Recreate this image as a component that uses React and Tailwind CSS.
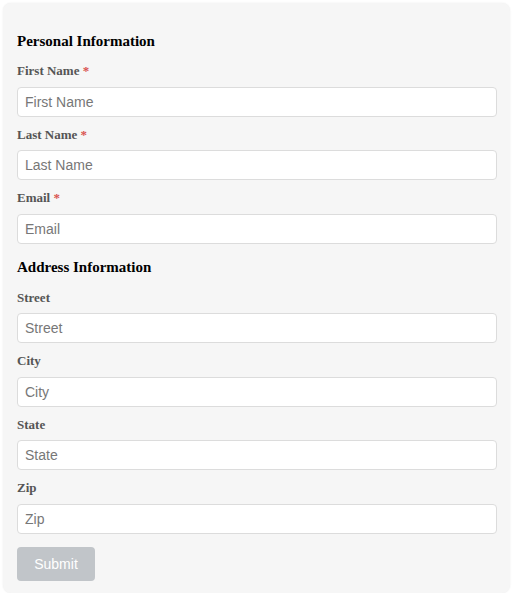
function Field({ name, req }) {
  return (
    <div className="flex flex-col mb-[10px]">
      <label className="text-[13px] leading-[16.5px] font-bold text-[#555] mb-[7px] font-['Liberation_Serif',serif]">
        {name}
        {req && <span className="text-[#d9534f]"> *</span>}
      </label>
      <input
        className="w-full h-[30px] border border-[#dcdcdc] rounded-[4px] bg-white px-[7px] text-[14px] text-[#333] placeholder:text-[#777] outline-none font-['Liberation_Sans',Arial,sans-serif]"
        placeholder={name}
      />
    </div>
  );
}

export default function App() {
  return (
    <div className="w-[513px] h-[593px] bg-white pt-[3px] px-[3px]">
      <div className="flex flex-col items-stretch bg-[#f6f6f6] rounded-[8px] shadow-[0_0_2px_rgba(0,0,0,0.08)] pl-[14px] pr-[13px] pt-[30px] h-[590px]">
        <h2 className="text-[15px] leading-[16px] font-bold text-black mb-[14px] font-['Liberation_Serif',serif]">
          Personal Information
        </h2>
        <Field name="First Name" req />
        <Field name="Last Name" req />
        <Field name="Email" req />
        <h2 className="text-[15px] leading-[16px] font-bold text-black mt-[5px] mb-[15px] font-['Liberation_Serif',serif]">
          Address Information
        </h2>
        <Field name="Street" />
        <Field name="City" />
        <Field name="State" />
        <Field name="Zip" />
        <button className="self-start mt-[3.5px] w-[78px] h-[34px] rounded-[4px] bg-[#c1c5c9] text-white text-[14px] font-['Liberation_Sans',Arial,sans-serif]">
          Submit
        </button>
      </div>
    </div>
  );
}
